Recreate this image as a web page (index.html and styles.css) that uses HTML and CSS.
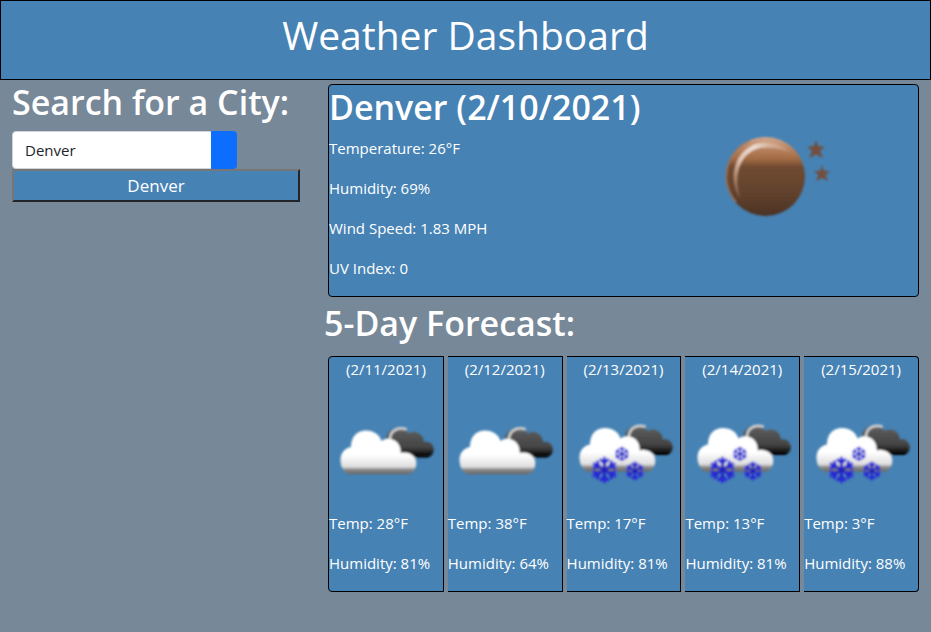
FILE: index.html
```html
<!DOCTYPE html>
<html lang="en">
<head>
<meta charset="utf-8">
<meta name="viewport" content="width=device-width, initial-scale=1">
<title>Weather Dashboard</title>
<link rel="stylesheet" href="styles.css">
</head>
<body>
<svg class="defs" aria-hidden="true" width="0" height="0">
  <defs>
    <linearGradient id="white-fill" gradientUnits="userSpaceOnUse" x1="0" y1="33" x2="0" y2="78">
      <stop offset="0" stop-color="#fff"/>
      <stop offset=".55" stop-color="#fff"/>
      <stop offset=".82" stop-color="#dedede"/>
      <stop offset=".88" stop-color="#8c8c8c"/>
      <stop offset="1" stop-color="#626262"/>
    </linearGradient>
    <linearGradient id="dark-fill" gradientUnits="userSpaceOnUse" x1="0" y1="28" x2="0" y2="60">
      <stop offset="0" stop-color="#777"/>
      <stop offset=".3" stop-color="#555"/>
      <stop offset=".7" stop-color="#444"/>
      <stop offset="1" stop-color="#000"/>
    </linearGradient>
    <linearGradient id="moon-fill" x1="0" y1="0" x2="0" y2="1">
      <stop offset="0" stop-color="#d6a88c"/>
      <stop offset=".14" stop-color="#b98462"/>
      <stop offset=".27" stop-color="#a56d45"/>
      <stop offset=".38" stop-color="#704a31"/>
      <stop offset=".7" stop-color="#62422d"/>
      <stop offset="1" stop-color="#4c3225"/>
    </linearGradient>
    <linearGradient id="moon-shine" x1="0" y1="1" x2="1" y2="0">
      <stop offset="0" stop-color="#c08a68" stop-opacity=".3"/>
      <stop offset=".4" stop-color="#e0c4b4"/>
      <stop offset=".65" stop-color="#ecdcd2"/>
      <stop offset="1" stop-color="#c99878" stop-opacity=".3"/>
    </linearGradient>
    <linearGradient id="flake-ink" gradientUnits="userSpaceOnUse" x1="0" y1="-12" x2="0" y2="12">
      <stop offset="0" stop-color="#2a2ae0"/>
      <stop offset="1" stop-color="#1a1a98"/>
    </linearGradient>
    <filter id="soft" x="-10%" y="-10%" width="120%" height="120%"><feGaussianBlur stdDeviation=".9"/></filter>
    <g id="clouds">
      <path fill="url(#dark-fill)" d="M52 45 L57 42 A12.500 12.500 0 0 1 80 36.500 A10 10 0 0 1 95 45 A7.800 7.800 0 1 1 99 60.500 H70 Z"/>
      <path fill="none" stroke="#d2d2d2" stroke-width="2.400" stroke-linecap="round" d="M61 43 C61 35 67 29.500 77 32"/>
      <path fill="url(#white-fill)" d="M20 77.500 C15 76 11.500 70 11.500 63 C11.500 56 16 51 22 50 C22 40 28 33.500 37 33.500 C45 33.500 51 38 52.500 44 C60 39 72 43 72 56 C80 54 87.500 59 87.500 66 C87.500 71 85 76 80 77.500 Z"/>
    </g>
    <g id="flake-arm"><path d="M0 0V-12M0 -6L-4 -10M0 -6L4 -10"/></g>
    <g id="flake" fill="none" stroke="url(#flake-ink)" stroke-width="2.600">
      <use href="#flake-arm"/>
      <use href="#flake-arm" transform="rotate(60)"/>
      <use href="#flake-arm" transform="rotate(120)"/>
      <use href="#flake-arm" transform="rotate(180)"/>
      <use href="#flake-arm" transform="rotate(240)"/>
      <use href="#flake-arm" transform="rotate(300)"/>
    </g>
    <symbol id="icon-clouds" viewBox="0 0 114 114">
      <g filter="url(#soft)"><use href="#clouds"/></g>
    </symbol>
    <symbol id="icon-snow" viewBox="0 0 114 114">
      <g filter="url(#soft)">
        <use href="#clouds" transform="translate(1 -2.500)"/>
        <use href="#flake" transform="translate(37.500 73) scale(1.100)"/>
        <use href="#flake" transform="translate(55 57) scale(.6)"/>
        <use href="#flake" transform="translate(68 74) scale(.78)"/>
      </g>
    </symbol>
  </defs>
</svg>

<header class="banner"><h1>Weather Dashboard</h1></header>

<div class="layout">
  <aside class="search">
    <form>
      <label class="heading" for="city">Search for a City:</label>
      <div class="search-row">
        <input id="city" type="text" value="Denver">
        <button class="go" type="button" aria-label="Search"></button>
      </div>
    </form>
    <button class="history" type="button">Denver</button>
  </aside>

  <main>
    <section class="current">
      <div>
        <h2 class="heading">Denver (2/10/2021)</h2>
        <p>Temperature: 26°F</p>
        <p>Humidity: 69%</p>
        <p>Wind Speed: 1.83 MPH</p>
        <p>UV Index: 0</p>
      </div>
      <svg class="moon" viewBox="-4 -35 150 150" role="img" aria-label="Clear night">
        <g filter="url(#soft)">
          <circle cx="65.500" cy="56.500" r="39.500" fill="url(#moon-fill)"/>
          <path fill="none" stroke="#a5765a" stroke-width="2" opacity=".7" d="M36 82 A38.500 38.500 0 0 1 50 21"/>
          <path fill="url(#moon-shine)" d="M40 78 C29 62 32 35 53 25 C67 19 82 24 90 32 C79 28 66 26 56 29 C39 36 33 56 40 78 Z"/>
          <path fill="#72503e" d="M116 20 L118.500 26.500 L125 26.500 L120 31 L123 38 L116 34.500 L109 38 L112 31 L107 26.500 L113.500 26.500 Z"/>
          <path fill="#72503e" d="M122 45 L124 51 L130 51 L125.500 55 L128 61 L122 58 L116 61 L118.500 55 L114 51 L120 51 Z"/>
        </g>
      </svg>
    </section>

    <h2 class="heading">5-Day Forecast:</h2>
    <section class="forecast">
      <article class="day">
        <p class="date">(2/11/2021)</p>
        <svg viewBox="0 0 114 114" role="img" aria-label="Cloudy"><use href="#icon-clouds"/></svg>
        <p>Temp: 28°F</p>
        <p>Humidity: 81%</p>
      </article>
      <article class="day">
        <p class="date">(2/12/2021)</p>
        <svg viewBox="0 0 114 114" role="img" aria-label="Cloudy"><use href="#icon-clouds"/></svg>
        <p>Temp: 38°F</p>
        <p>Humidity: 64%</p>
      </article>
      <article class="day">
        <p class="date">(2/13/2021)</p>
        <svg viewBox="0 0 114 114" role="img" aria-label="Snow"><use href="#icon-snow"/></svg>
        <p>Temp: 17°F</p>
        <p>Humidity: 81%</p>
      </article>
      <article class="day">
        <p class="date">(2/14/2021)</p>
        <svg viewBox="0 0 114 114" role="img" aria-label="Snow"><use href="#icon-snow"/></svg>
        <p>Temp: 13°F</p>
        <p>Humidity: 81%</p>
      </article>
      <article class="day">
        <p class="date">(2/15/2021)</p>
        <svg viewBox="0 0 114 114" role="img" aria-label="Snow"><use href="#icon-snow"/></svg>
        <p>Temp: 3°F</p>
        <p>Humidity: 88%</p>
      </article>
    </section>
  </main>
</div>
</body>
</html>
```
FILE: styles.css
```css
*,
*::before,
*::after {
  box-sizing: border-box;
}

body {
  margin: 0;
  background: lightslategray;
  color: #fff;
  font: 400 15px/24px "Segoe UI", "Open Sans", "Noto Sans", sans-serif;
}

.defs {
  position: absolute;
}

p {
  margin: 0 0 16px;
}

.banner {
  padding: 8px 0 18px;
  border: 1px solid #000;
  background: steelblue;
  text-align: center;
}

.banner h1 {
  margin: 0;
  font-size: 39px;
  font-weight: 400;
  line-height: 52px;
}

.layout {
  display: grid;
  grid-template-columns: 288fr 599fr;
  gap: 24px;
  padding: 0 8px 0 12px;
}

.heading {
  display: block;
  margin: 0;
  padding: 1px 0 7px;
  font-size: 34px;
  font-weight: 600;
  line-height: 43px;
  white-space: nowrap;
}

.search-row {
  display: flex;
}

.search-row input {
  width: 200px;
  height: 38px;
  padding: 6px 12px;
  border: 1px solid #ced4da;
  border-radius: 4px 0 0 4px;
  background: #fff;
  color: #212529;
  font: inherit;
}

.go {
  width: 26px;
  margin-left: -1px;
  border: 0;
  border-radius: 0 4px 4px 0;
  background: #0d6efd;
}

.history {
  display: block;
  width: 100%;
  padding: 1px 6px;
  border: 2px solid;
  border-color: #767676 #212529 #212529 #767676;
  background: steelblue;
  color: #fff;
  font: inherit;
  font-size: 17px;
  line-height: 27px;
}

.current {
  display: grid;
  grid-template-columns: repeat(2, minmax(0, 1fr));
  margin: 4px;
  border: 1px solid #000;
  border-radius: 4px;
  background: steelblue;
}

.moon {
  width: 150px;
  height: 150px;
  justify-self: center;
}

.forecast {
  display: flex;
  gap: 4px;
  padding: 4px;
}

.day {
  flex: 1 1 0;
  min-width: 0;
  border: 1px solid #000;
  border-left: 0;
  background: steelblue;
  white-space: nowrap;
}

.day:first-child {
  border-left: 1px solid #000;
  border-radius: 4px 0 0 4px;
}

.day:last-child {
  border-radius: 0 4px 4px 0;
}

.date {
  text-align: center;
}

.day svg {
  display: block;
  width: 100%;
}
```
